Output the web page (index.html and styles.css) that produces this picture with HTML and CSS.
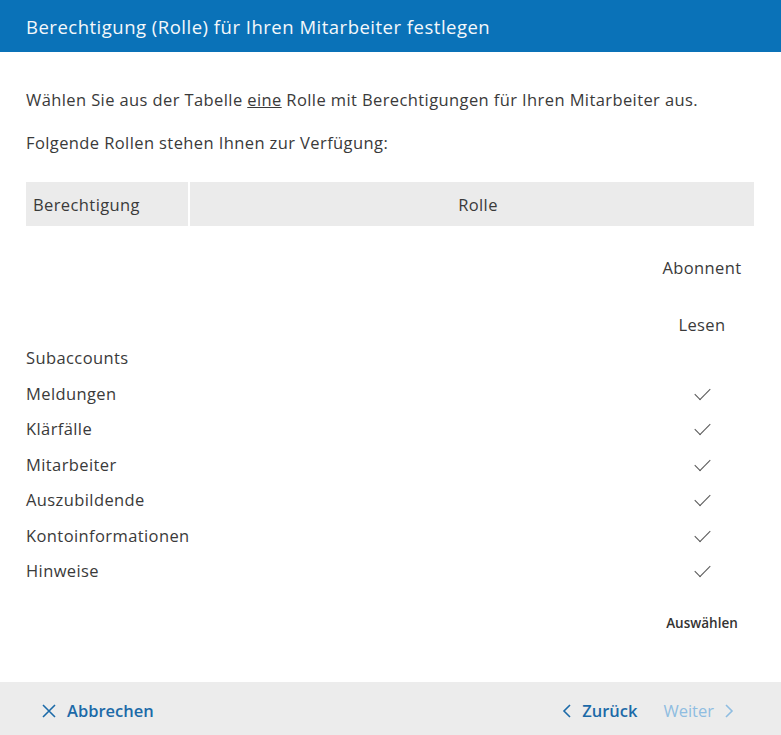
FILE: index.html
```html
<!DOCTYPE html>
<html>
<head>
  <title>Berechtigung festlegen</title>
  <link rel="stylesheet" href="styles.css">
</head>
<body>
  <div class="dialog">
    <div class="dialog-header">
      <h1>Berechtigung (Rolle) für Ihren Mitarbeiter festlegen</h1>
    </div>
    <div class="dialog-body">
      <p>Wählen Sie aus der Tabelle <u>eine</u> Rolle mit Berechtigungen für Ihren Mitarbeiter aus.</p>
      <p>Folgende Rollen stehen Ihnen zur Verfügung:</p>

      <div class="roles">
        <div class="roles-head">
          <div class="head-cell">Berechtigung</div>
          <div class="head-cell head-role">Rolle</div>
        </div>
        <div class="role-row role-name">
          <div></div><div></div><div class="role-col">Abonnent</div>
        </div>
        <div class="role-row role-level">
          <div></div><div></div><div class="role-col">Lesen</div>
        </div>
        <div class="perm-row"><div>Subaccounts</div><div></div><div class="role-col"></div></div>
        <div class="perm-row"><div>Meldungen</div><div></div><div class="role-col"><span class="check"></span></div></div>
        <div class="perm-row"><div>Klärfälle</div><div></div><div class="role-col"><span class="check"></span></div></div>
        <div class="perm-row"><div>Mitarbeiter</div><div></div><div class="role-col"><span class="check"></span></div></div>
        <div class="perm-row"><div>Auszubildende</div><div></div><div class="role-col"><span class="check"></span></div></div>
        <div class="perm-row"><div>Kontoinformationen</div><div></div><div class="role-col"><span class="check"></span></div></div>
        <div class="perm-row"><div>Hinweise</div><div></div><div class="role-col"><span class="check"></span></div></div>
        <div class="role-row select-row">
          <div></div><div></div><div class="role-col"><a class="select-link">Auswählen</a></div>
        </div>
      </div>
    </div>
    <div class="dialog-footer">
      <a class="nav-link">
        <svg width="16" height="16" viewBox="0 0 16 16"><path d="M2 2 L14 14 M14 2 L2 14" stroke="currentColor" stroke-width="1.6" fill="none"/></svg>
        Abbrechen
      </a>
      <div class="nav-right">
        <a class="nav-link">
          <svg width="10" height="16" viewBox="0 0 10 16"><path d="M8 2 L2 8 L8 14" stroke="currentColor" stroke-width="1.6" fill="none"/></svg>
          Zurück
        </a>
        <a class="nav-link disabled">
          Weiter
          <svg width="10" height="16" viewBox="0 0 10 16"><path d="M2 2 L8 8 L2 14" stroke="currentColor" stroke-width="1.6" fill="none"/></svg>
        </a>
      </div>
    </div>
  </div>
</body>
</html>
```

FILE: styles.css
```css
body {
  margin: 0;
  font-family: 'Open Sans', 'Noto Sans', sans-serif;
  color: #3a3a3a;
  background-color: #fff;
}
.dialog {
  display: flex;
  flex-direction: column;
  min-height: 100vh;
}
.dialog-header {
  background-color: #0a72b8;
  height: 52px;
  display: flex;
  align-items: center;
  padding: 0 26px;
}
.dialog-header h1 {
  margin: 0;
  font-size: 18.5px;
  letter-spacing: 0.5px;
  font-weight: normal;
  color: #f4f8fb;
}
.dialog-body {
  flex: 1;
  padding: 0 27px 0 26px;
}
.dialog-body p {
  margin: 0;
  font-size: 16.5px;
  letter-spacing: 0.4px;
  line-height: 24px;
}
.dialog-body p:first-child {
  margin-top: 36px;
}
.dialog-body p + p {
  margin-top: 19px;
}
.roles {
  margin-top: 27px;
  font-size: 16.5px;
  letter-spacing: 0.4px;
}
.roles-head {
  display: flex;
  gap: 2px;
  height: 44px;
}
.head-cell {
  background-color: #ebebeb;
  width: 162px;
  display: flex;
  align-items: center;
  padding-left: 7px;
  box-sizing: border-box;
}
.head-role {
  flex: 1;
  justify-content: center;
  padding-left: 12px;
}
.role-row, .perm-row {
  display: grid;
  grid-template-columns: 162px 1fr 104px;
}
.role-col {
  text-align: center;
}
.role-name {
  height: 71px;
  padding-top: 30px;
  line-height: 24px;
  box-sizing: border-box;
}
.role-level {
  height: 43px;
  padding-top: 16px;
  line-height: 24px;
  box-sizing: border-box;
}
.perm-row {
  height: 35.5px;
  line-height: 35.5px;
}
.check {
  display: inline-block;
  width: 14px;
  height: 7px;
  border-left: 1.5px solid #555;
  border-bottom: 1.5px solid #555;
  transform: rotate(-45deg);
  vertical-align: middle;
  margin-top: -7px;
}
.select-row {
  padding-top: 23px;
  line-height: 20px;
}
.select-link {
  font-size: 13.5px;
  letter-spacing: 0;
  font-weight: 600;
  color: #333;
}
.dialog-footer {
  background-color: #ececec;
  height: 53px;
  display: flex;
  align-items: center;
  justify-content: space-between;
  padding: 4px 47px 0 41px;
  box-sizing: border-box;
}
.nav-right {
  display: flex;
  gap: 26px;
}
.nav-link {
  display: flex;
  align-items: center;
  gap: 10px;
  font-size: 16.5px;
  font-weight: 600;
  color: #1c6aa8;
  cursor: pointer;
}
.nav-link.disabled {
  color: #8fbde1;
  font-weight: normal;
}
```
